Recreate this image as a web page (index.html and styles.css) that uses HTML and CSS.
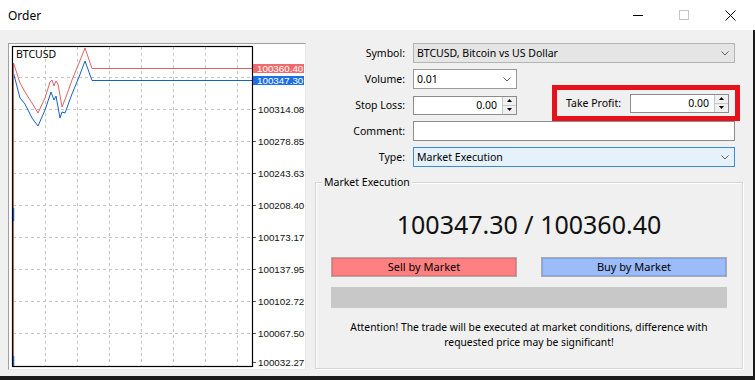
FILE: index.html
```html
<!DOCTYPE html>
<html>
<head>
<meta charset="utf-8">
<title>Order</title>
<link rel="stylesheet" href="styles.css">
</head>
<body>
<div class="window">
  <div class="titlebar">
    <span class="title">Order</span>
    <div class="controls">
      <span class="ctl"><svg width="10" height="10" viewBox="0 0 10 10"><line x1="0" y1="5.5" x2="10" y2="5.5" stroke="#000" stroke-width="1"/></svg></span>
      <span class="ctl"><svg width="10" height="10" viewBox="0 0 10 10"><rect x="0.5" y="0.5" width="9" height="9" fill="none" stroke="#c6c6c6" stroke-width="1"/></svg></span>
      <span class="ctl"><svg width="11" height="11" viewBox="0 0 11 11"><path d="M0.5 0.5L10.5 10.5M10.5 0.5L0.5 10.5" stroke="#000" stroke-width="1"/></svg></span>
    </div>
  </div>
  <div class="client">
    <div class="chart">
      <svg width="296" height="325" viewBox="9 44 296 325">
        <rect x="9" y="44" width="296" height="325" fill="#fff"/>
        <g stroke="#c4c4c4" stroke-width="1" stroke-dasharray="3 3" fill="none">
          <path d="M45.5 47V366M77.5 47V366M109.5 47V366M141.5 47V366M173.5 47V366M205.5 47V366M237.5 47V366"/>
          <path d="M13 77.5H252M13 109.5H252M13 141.5H252M13 173.5H252M13 205.5H252M13 237.5H252M13 269.5H252M13 301.5H252M13 333.5H252"/>
        </g>
        <path d="M253 109.5h3M253 141.5h3M253 173.5h3M253 205.5h3M253 237.5h3M253 269.5h3M253 301.5h3M253 333.5h3M253 362.5h3" stroke="#555" stroke-width="1"/>
        <polyline fill="none" stroke="#e06464" stroke-width="1" points="13.5,63 20,83 25,92 32,103 38,113 45,98 50,82 52,80 54,86 56,81 58,84 62,107 66,97 72,80 79,63 85,48 92,68.5 253,68.5"/>
        <polyline fill="none" stroke="#1562c4" stroke-width="1" points="13.5,73 20,98 25,104 32,118 38,126 45,110 51,92 54,100 56,96 60,118 62,112 65,113 72,94 79,77 85,61 92,80.5 253,80.5"/>
        <path d="M13.5 63V366" stroke="#e06464" stroke-width="1"/>
        <path d="M13.5 208V221M13.5 356V366" stroke="#1562c4" stroke-width="1.5"/>
        <rect x="12.5" y="46.5" width="240" height="320" fill="none" stroke="#000" stroke-width="1.2"/>
        <text class="sym" x="16" y="57.5">BTCUSD</text>
        <rect x="253" y="64" width="51" height="9" fill="#ef6a6a"/>
        <rect x="253" y="76" width="51" height="9" fill="#1d6fe3"/>
        <g class="axis">
          <text class="inv" x="257" y="72">100360.40</text>
          <text class="inv" x="257" y="84">100347.30</text>
          <text x="258" y="113">100314.08</text>
          <text x="258" y="145">100278.85</text>
          <text x="258" y="177">100243.63</text>
          <text x="258" y="209">100208.40</text>
          <text x="258" y="241">100173.17</text>
          <text x="258" y="273">100137.95</text>
          <text x="258" y="305">100102.72</text>
          <text x="258" y="337">100067.50</text>
          <text x="258" y="366">100032.27</text>
        </g>
      </svg>
    </div>
    <div class="panel">
      <div class="form">
        <span class="lbl">Symbol:</span>
        <div class="combo combo-ro"><span>BTCUSD, Bitcoin vs US Dollar</span><svg class="chev" width="8" height="5" viewBox="0 0 8 5"><polyline points="0.5,0.5 4,4 7.5,0.5" fill="none" stroke="#606060" stroke-width="1"/></svg></div>

        <span class="lbl">Volume:</span>
        <div class="field"><div class="combo combo-vol"><span>0.01</span><svg class="chev" width="8" height="5" viewBox="0 0 8 5"><polyline points="0.5,0.5 4,4 7.5,0.5" fill="none" stroke="#606060" stroke-width="1"/></svg></div></div>

        <span class="lbl">Stop Loss:</span>
        <div class="field sl-row">
          <div class="spin-input sl">
            <span class="num">0.00</span>
            <span class="spin"><span class="sp-up"><svg width="5" height="3" viewBox="0 0 5 3"><path d="M0 3L2.5 0L5 3Z" fill="#000"/></svg></span><span class="sp-dn"><svg width="5" height="3" viewBox="0 0 5 3"><path d="M0 0L2.5 3L5 0Z" fill="#000"/></svg></span></span>
          </div>
          <div class="tp-box">
            <span class="tp-label">Take Profit:</span>
            <div class="spin-input tp">
              <span class="num">0.00</span>
              <span class="spin"><span class="sp-up"><svg width="5" height="3" viewBox="0 0 5 3"><path d="M0 3L2.5 0L5 3Z" fill="#000"/></svg></span><span class="sp-dn"><svg width="5" height="3" viewBox="0 0 5 3"><path d="M0 0L2.5 3L5 0Z" fill="#000"/></svg></span></span>
            </div>
          </div>
        </div>

        <span class="lbl">Comment:</span>
        <div class="text-input"></div>

        <span class="lbl">Type:</span>
        <div class="combo combo-type"><span>Market Execution</span><svg class="chev" width="8" height="5" viewBox="0 0 8 5"><polyline points="0.5,0.5 4,4 7.5,0.5" fill="none" stroke="#606060" stroke-width="1"/></svg></div>
      </div>

      <div class="group">
        <span class="group-title">Market Execution</span>
        <div class="price">100347.30 / 100360.40</div>
        <div class="btn-row">
          <div class="btn sell">Sell by Market</div>
          <div class="btn buy">Buy by Market</div>
        </div>
        <div class="bar"></div>
        <p class="note">Attention! The trade will be executed at market conditions, difference with<br>requested price may be significant!</p>
      </div>
    </div>
  </div>
</div>
</body>
</html>
```

FILE: styles.css
```css
* { box-sizing: border-box; margin: 0; padding: 0; }

body {
  width: 755px;
  height: 380px;
  overflow: hidden;
  background: #fff;
  font-family: "Noto Sans", "Liberation Sans", sans-serif;
  font-size: 10.5px;
  color: #000;
}

.titlebar {
  height: 30px;
  display: flex;
  align-items: center;
  justify-content: space-between;
  padding: 0 2px 0 8px;
  background: #fff;
}

.title { font-size: 12px; }

.controls { display: flex; height: 30px; }

.ctl {
  width: 46px;
  height: 30px;
  display: flex;
  align-items: center;
  justify-content: center;
}

.client {
  height: 350px;
  display: flex;
  gap: 9px;
  padding: 13px 0 0 8px;
  background: #f0f0f0;
  border-right: 2px solid #1c1c1c;
  border-bottom: 4px solid #1c1c1c;
}

.chart {
  width: 298px;
  height: 327px;
  border: 1px solid;
  border-color: #a0a0a0 #e8e8e8 #e8e8e8 #a0a0a0;
  background: #fff;
}

.chart svg { display: block; }

.chart .sym {
  font-family: "Noto Sans", sans-serif;
  font-size: 10.5px;
  fill: #000;
}

.chart .axis text {
  font-family: "Liberation Sans", sans-serif;
  font-size: 9.8px;
  fill: #111;
}

.chart .axis text.inv { fill: #fff; }

.panel {
  width: 428px;
  display: flex;
  flex-direction: column;
}

.form {
  display: grid;
  grid-template-columns: 90px 322px;
  grid-auto-rows: 20px;
  column-gap: 8px;
  row-gap: 6px;
}

.lbl {
  text-align: right;
  line-height: 20px;
  white-space: nowrap;
}

.field { display: flex; align-items: center; }

.combo {
  height: 20px;
  display: flex;
  align-items: center;
  justify-content: space-between;
  padding: 0 5px 0 3px;
  border: 1px solid #adadad;
  background: #fff;
}

.combo-ro { background: #e5e5e5; border-color: #b4b4b4; }

.combo-vol { width: 104px; border-color: #9a9a9a; }

.combo-type { background: #e5f1fb; border-color: #3c8bd6; }

.chev { display: block; }

.sl-row { justify-content: space-between; }

.spin-input {
  height: 19px;
  display: flex;
  border: 1px solid #8c8c8c;
  background: #fff;
}

.spin-input .num {
  flex: 1;
  text-align: right;
  line-height: 17px;
  padding-right: 5px;
}

.sl { width: 104px; }

.tp { width: 99px; }

.spin {
  width: 14px;
  display: flex;
  flex-direction: column;
  border-left: 1px solid #c8c8c8;
  background: #f0f0f0;
}

.sp-up, .sp-dn {
  flex: 1;
  display: flex;
  align-items: center;
  justify-content: center;
}

.sp-up { border-bottom: 1px solid #c8c8c8; }

.sp-up svg, .sp-dn svg { display: block; }

.tp-box {
  width: 188px;
  height: 36px;
  margin: -10px -5px -6px 0;
  border: 5px solid #e5121b;
  display: flex;
  align-items: center;
  justify-content: flex-end;
  padding-right: 6px;
}

.tp-label { margin-right: 9px; }

.text-input {
  height: 20px;
  border: 1px solid #8c8c8c;
  background: #fff;
}

.group {
  margin-top: 15px;
  width: 428px;
  height: 187px;
  border: 1px solid #d5d5d5;
  box-shadow: 1px 1px 0 #fff, inset 1px 1px 0 #fff;
  padding: 0 15px;
  display: flex;
  flex-direction: column;
}

.group-title {
  align-self: flex-start;
  margin: -8px 0 0 -9px;
  padding: 0 2px;
  line-height: 15px;
  background: #f0f0f0;
}

.price {
  margin-top: 19px;
  height: 30px;
  line-height: 30px;
  text-align: center;
  font-size: 25px;
  color: #111;
}

.btn-row {
  margin-top: 18px;
  display: flex;
  justify-content: space-between;
}

.btn {
  width: 186px;
  height: 20px;
  line-height: 18px;
  text-align: center;
  font-size: 11px;
  border: 1px solid #acacac;
}

.sell { background: #ff8080; box-shadow: inset 0 0 0 1px #e86f6f; }

.buy { background: #9bbcf8; box-shadow: inset 0 0 0 1px #7fa3e6; }

.bar {
  margin-top: 10px;
  height: 21px;
  background: #c8c8c8;
}

.note {
  margin-top: 12px;
  text-align: center;
  line-height: 15px;
  font-size: 10.3px;
}
```
